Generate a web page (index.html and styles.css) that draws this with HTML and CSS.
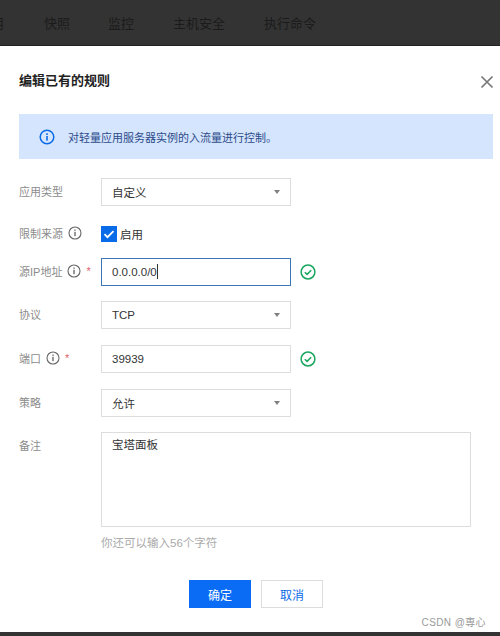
FILE: index.html
```html
<!DOCTYPE html>
<html lang="zh">
<head>
<meta charset="utf-8">
<title>编辑已有的规则</title>
<link rel="stylesheet" href="styles.css">
</head>
<body>
<div class="app">
  <nav class="tabs">
    <span class="tab tab-cut">用</span>
    <span class="tab tab-a">快照</span>
    <span class="tab tab-b">监控</span>
    <span class="tab tab-c">主机安全</span>
    <span class="tab tab-d">执行命令</span>
  </nav>
  <main class="modal">
    <header class="modal-head">
      <h1 class="title">编辑已有的规则</h1>
      <svg class="close" width="14" height="14" viewBox="0 0 14 14"><path d="M1.5 1.5l11 11M12.5 1.5l-11 11" stroke="#777" stroke-width="1.7" fill="none"/></svg>
    </header>
    <div class="banner">
      <svg class="banner-icon" width="16" height="16" viewBox="0 0 16 16"><circle cx="8" cy="8" r="6.8" fill="none" stroke="#0a6be8" stroke-width="1.5"/><rect x="7.2" y="7" width="1.6" height="4.6" fill="#0a6be8"/><rect x="7.2" y="4.3" width="1.6" height="1.7" fill="#0a6be8"/></svg>
      <span>对轻量应用服务器实例的入流量进行控制。</span>
    </div>
    <form class="form">
      <div class="row">
        <div class="label">应用类型</div>
        <div class="select"><span>自定义</span><i class="caret"></i></div>
      </div>
      <div class="row row-check">
        <div class="label">限制来源<svg class="info" width="14" height="14" viewBox="0 0 14 14"><circle cx="7" cy="7" r="6" fill="none" stroke="#666" stroke-width="1.1"/><rect x="6.4" y="5.8" width="1.2" height="4.4" fill="#555"/><rect x="6.4" y="3.5" width="1.2" height="1.3" fill="#555"/></svg></div>
        <div class="check"><span class="box"><svg width="16" height="16" viewBox="0 0 16 16"><path d="M3.5 8.2l3 3 6-6" fill="none" stroke="#fff" stroke-width="1.8"/></svg></span><span>启用</span></div>
      </div>
      <div class="row">
        <div class="label">源IP地址<svg class="info" width="14" height="14" viewBox="0 0 14 14"><circle cx="7" cy="7" r="6" fill="none" stroke="#666" stroke-width="1.1"/><rect x="6.4" y="5.8" width="1.2" height="4.4" fill="#555"/><rect x="6.4" y="3.5" width="1.2" height="1.3" fill="#555"/></svg><em class="req">*</em></div>
        <div class="input focus"><span>0.0.0.0/0</span><i class="cursor"></i></div>
        <svg class="ok" width="16" height="16" viewBox="0 0 16 16"><circle cx="8" cy="8" r="6.9" fill="none" stroke="#1aa660" stroke-width="1.5"/><path d="M4.8 8.2l2.3 2.2 4.1-4.1" fill="none" stroke="#1aa660" stroke-width="1.5"/></svg>
      </div>
      <div class="row">
        <div class="label">协议</div>
        <div class="select"><span>TCP</span><i class="caret"></i></div>
      </div>
      <div class="row">
        <div class="label">端口<svg class="info" width="14" height="14" viewBox="0 0 14 14"><circle cx="7" cy="7" r="6" fill="none" stroke="#666" stroke-width="1.1"/><rect x="6.4" y="5.8" width="1.2" height="4.4" fill="#555"/><rect x="6.4" y="3.5" width="1.2" height="1.3" fill="#555"/></svg><em class="req">*</em></div>
        <div class="input"><span>39939</span></div>
        <svg class="ok" width="16" height="16" viewBox="0 0 16 16"><circle cx="8" cy="8" r="6.9" fill="none" stroke="#1aa660" stroke-width="1.5"/><path d="M4.8 8.2l2.3 2.2 4.1-4.1" fill="none" stroke="#1aa660" stroke-width="1.5"/></svg>
      </div>
      <div class="row">
        <div class="label">策略</div>
        <div class="select"><span>允许</span><i class="caret"></i></div>
      </div>
      <div class="row row-top">
        <div class="label label-top">备注</div>
        <div class="area-wrap">
          <div class="area">宝塔面板</div>
          <div class="hint">你还可以输入56个字符</div>
        </div>
      </div>
    </form>
    <div class="actions">
      <button type="button" class="btn primary">确定</button>
      <button type="button" class="btn">取消</button>
    </div>
    <div class="mark">CSDN @専心</div>
  </main>
  <div class="foot"></div>
</div>
</body>
</html>
```

FILE: styles.css
```css
* { box-sizing: border-box; }
html, body { margin: 0; padding: 0; }
body {
  width: 500px;
  height: 636px;
  overflow: hidden;
  font-family: "Liberation Sans", "Noto Sans CJK SC", sans-serif;
  font-size: 11.5px;
  color: #333;
  background: #fff;
}
.app { display: flex; flex-direction: column; height: 636px; }
.tabs {
  height: 46px;
  flex: none;
  background: #333;
  border-bottom: 1px solid #222;
  display: flex;
  align-items: center;
  color: #1b1b1b;
  font-size: 13px;
  padding-bottom: 1px;
  overflow: hidden;
}
.tab-cut { margin-left: -9px; width: 53px; }
.tab-a { width: 64px; }
.tab-b { width: 65px; }
.tab-c { width: 91px; }
.modal {
  flex: 1;
  background: #fff;
  padding: 0 7px 0 19px;
  position: relative;
}
.modal-head {
  display: flex;
  justify-content: space-between;
  align-items: center;
  height: 68px;
}
.title { margin: 0 0 2px; font-size: 13px; font-weight: 700; color: #222; }
.close { margin-top: 4px; margin-right: -1px; }
.banner {
  height: 45px;
  background: #d4e5fd;
  display: flex;
  align-items: center;
  gap: 13px;
  padding-left: 20px;
  color: #2c4a8a;
  font-size: 11px;
}
.form { display: flex; flex-direction: column; gap: 15.6px; margin-top: 19px; }
.row { display: flex; align-items: center; height: 28px; }
.row-check { height: 20.6px; padding-top: 5px; }
.row-top { align-items: flex-start; height: auto; }
.label {
  width: 82px;
  flex: none;
  color: #8c8c8c;
  font-size: 11px;
  display: flex;
  align-items: center;
  gap: 5px;
  padding-bottom: 2px;
}
.label-top { margin-top: 5px; }
.req { color: #e0606a; font-style: normal; }
.select, .input {
  width: 190px;
  height: 28px;
  border: 1px solid #ddd;
  display: flex;
  align-items: center;
  justify-content: space-between;
  padding: 0 10px;
  color: #333;
  background: #fff;
}
.input { justify-content: flex-start; }
.focus { border-color: #3a76b8; }
.cursor { width: 1px; height: 15px; background: #333; }
.caret {
  width: 0;
  height: 0;
  border-left: 3.5px solid transparent;
  border-right: 3.5px solid transparent;
  border-top: 4px solid #808080;
}
.check { display: flex; align-items: center; gap: 3px; }
.box {
  width: 16px;
  height: 16px;
  background: #0a6be8;
  display: flex;
}
.ok { margin-left: 9px; }
.area-wrap { display: flex; flex-direction: column; }
.area {
  width: 370px;
  height: 95px;
  border: 1px solid #ddd;
  padding: 3px 10px;
  color: #333;
}
.hint { margin-top: 8px; color: #aaa; line-height: 16px; }
.actions {
  display: flex;
  justify-content: center;
  gap: 10px;
  margin-top: 29px;
}
.btn {
  width: 62px;
  height: 28px;
  border: 1px solid #ddd;
  background: #fff;
  color: #0a6be8;
  font: inherit;
  font-size: 12px;
  padding: 0;
}
.primary { background: #0a6cf5; border-color: #0a6cf5; color: #fff; }
.mark {
  position: absolute;
  right: 14px;
  bottom: 3px;
  color: #999;
  font-size: 10px;
  letter-spacing: 0.4px;
}
.foot { height: 4px; flex: none; background: #333; }
```
